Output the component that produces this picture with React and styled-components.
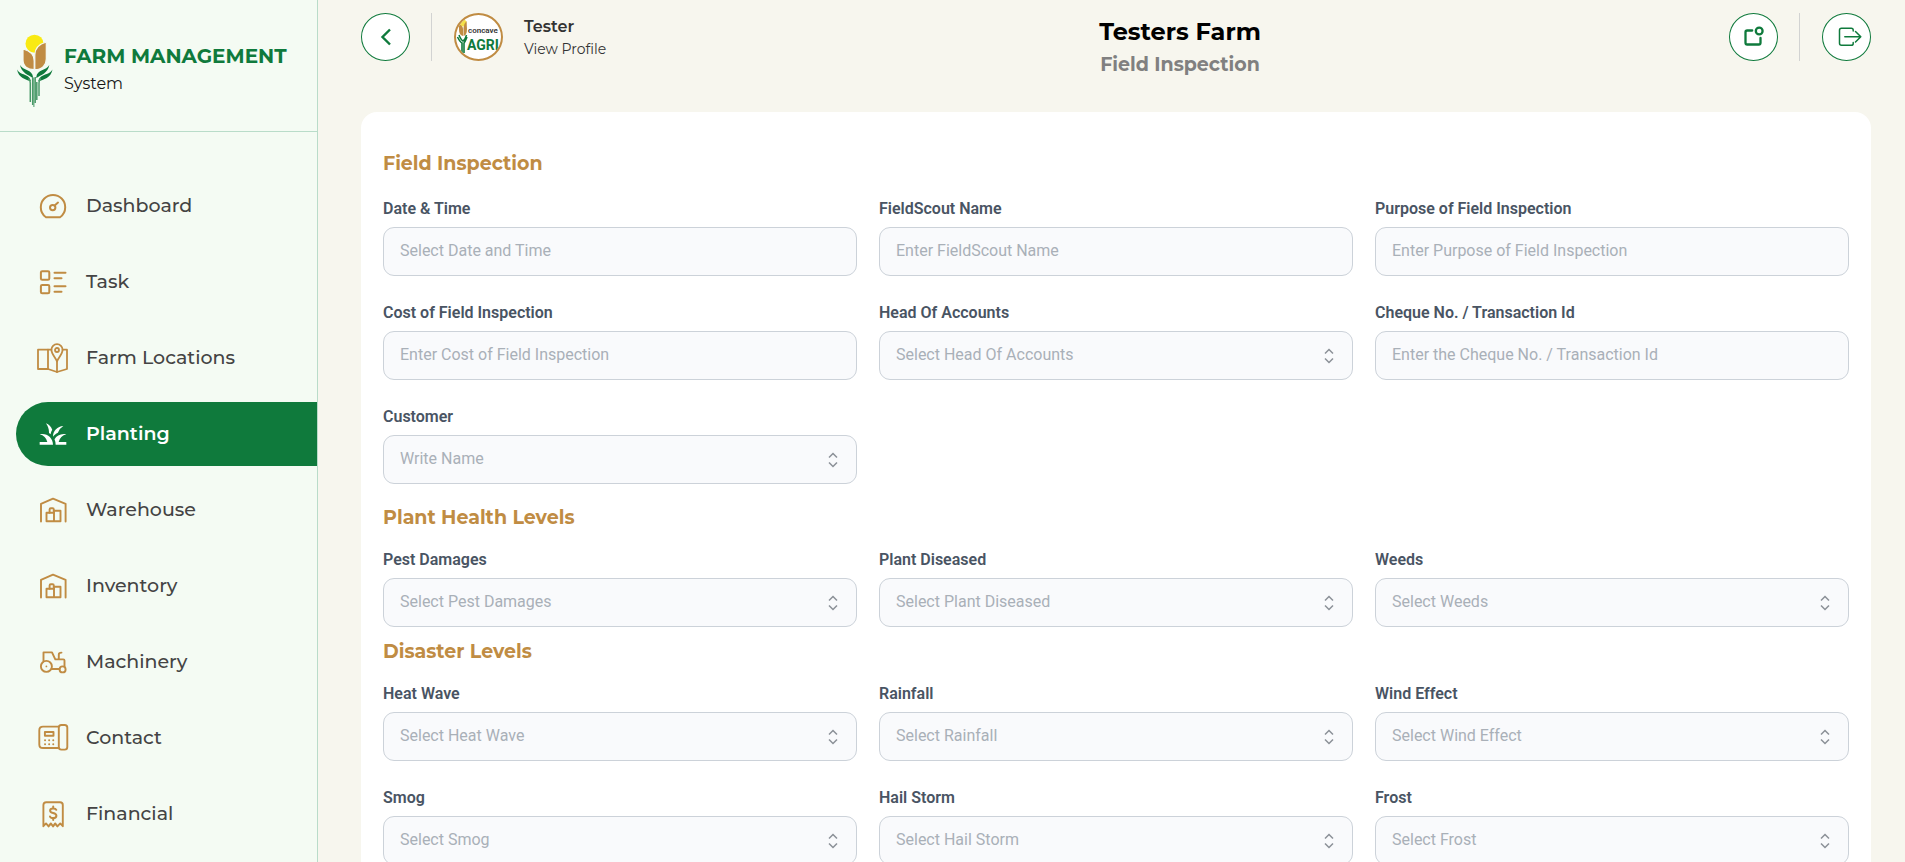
import React from "react";
import styled, { createGlobalStyle } from "styled-components";
import { MdGrass } from "react-icons/md";

const GREEN = "#0f7a3c";
const GOLD = "#c08c43";
const DISPLAY = 'Montserrat, Inter, "Open Sans", sans-serif';
const BODY = 'Roboto, "Liberation Sans", sans-serif';

const GlobalStyle = createGlobalStyle`
  *, *::before, *::after { box-sizing: border-box; }
  body { margin: 0; background: #f7f6ee; font-family: ${DISPLAY}; }
  h1, h2, p { margin: 0; }
  svg { display: block; overflow: visible; flex: none; }
`;

const Shell = styled.div`
  display: flex;
  height: 100vh;
  overflow: hidden;
`;

const Sidebar = styled.aside`
  flex: none;
  width: 318px;
  overflow: hidden;
  background: #f4fbf3;
  border-right: 1px solid #b9dcc9;
`;

const Brand = styled.div`
  display: flex;
  align-items: center;
  gap: 10px;
  height: 132px;
  padding: 9px 16px 0 17px;
  border-bottom: 1px solid #b9dcc9;
`;

const BrandName = styled.p`
  color: ${GREEN};
  font-size: 20px;
  font-weight: 700;
  line-height: 28px;
  white-space: nowrap;
`;

const BrandSub = styled.p`
  color: #161616;
  font-size: 16px;
  line-height: 28px;
`;

const Nav = styled.nav`
  display: flex;
  flex-direction: column;
  gap: 12px;
  padding: 42px 0 0 16px;
`;

const NavLink = styled.a`
  display: flex;
  flex: none;
  align-items: center;
  gap: 18px;
  height: 64px;
  padding-left: 22px;
  border-radius: 32px 0 0 32px;
  background: ${(p) => (p.$active ? GREEN : "transparent")};
  color: ${(p) => (p.$active ? "#fff" : "#444")};
  font-size: 19px;
  font-weight: ${(p) => (p.$active ? 600 : 500)};
  line-height: 28px;
  text-decoration: none;

  svg { color: ${(p) => (p.$active ? "#fff" : GOLD)}; }
`;

const IconSlot = styled.span`
  display: flex;
  flex: none;
  align-items: center;
  justify-content: center;
  width: 30px;
  height: 30px;
`;

const Main = styled.main`
  flex: 1;
  min-width: 0;
  padding: 13px 34px 0 43px;
  overflow-y: auto;
  scrollbar-width: none;
`;

const TopBar = styled.header`
  display: flex;
  justify-content: space-between;
  align-items: flex-start;
  height: 99px;
`;

const Group = styled.div`
  display: flex;
  align-items: center;
  min-width: ${(p) => (p.$wide ? "270px" : "0")};
`;

const RoundButton = styled.button`
  display: flex;
  align-items: center;
  justify-content: center;
  width: 49px;
  height: 48px;
  padding: 0;
  border: 1px solid ${GREEN};
  border-radius: 50%;
  background: #fff;
  color: ${GREEN};
  cursor: pointer;
`;

const Divider = styled.span`
  width: 1px;
  height: 48px;
  margin: 0 22px 0 21px;
  background: #d2d3d2;
`;

const Profile = styled.a`
  display: flex;
  align-items: center;
  gap: 21px;
  color: #333;
  text-decoration: none;
`;

const Avatar = styled.span`
  width: 49px;
  height: 48px;
  border: 2px solid ${GOLD};
  border-radius: 50%;
  background: #fff;
  overflow: hidden;
`;

const ProfileName = styled.p`
  font-size: 16px;
  font-weight: 600;
  line-height: 24px;
`;

const ProfileHint = styled.p`
  font-size: 14px;
  line-height: 20px;
`;

const Heading = styled.div`
  padding-top: 1px;
  text-align: center;
`;

const Title = styled.h1`
  color: #000;
  font-size: 24px;
  font-weight: 700;
  line-height: 36px;
`;

const Subtitle = styled.p`
  color: #808080;
  font-size: 19px;
  font-weight: 700;
  line-height: 30px;
`;

const Card = styled.form`
  min-height: calc(100vh - 112px);
  padding: 38px 22px;
  border-radius: 16px 16px 0 0;
  background: #fff;
`;

const Section = styled.section`
  margin-bottom: ${(p) => p.$after}px;
`;

const SectionTitle = styled.h2`
  margin-bottom: ${(p) => (p.$first ? 19 : 16)}px;
  color: ${GOLD};
  font-size: 19px;
  font-weight: 700;
  line-height: 28px;
`;

const FieldGrid = styled.div`
  display: grid;
  grid-template-columns: repeat(3, minmax(0, 1fr));
  gap: 25px 22px;
`;

const Field = styled.div`
  display: flex;
  flex-direction: column;
  gap: 6px;
`;

const Label = styled.label`
  color: #495463;
  font-family: ${BODY};
  font-size: 16px;
  font-weight: 600;
  line-height: 24px;
`;

const TextInput = styled.input`
  width: 100%;
  height: 49px;
  padding: 0 16px 2px;
  border: 1px solid #ccd2d9;
  border-radius: 11px;
  background: #f9fafc;
  color: #495463;
  font-family: ${BODY};
  font-size: 16px;

  &::placeholder { color: #a9b0b8; opacity: 1; }
`;

const SelectWrap = styled.div`
  display: grid;
  align-items: center;

  > * { grid-area: 1 / 1; }
  > svg { justify-self: end; margin-right: 18px; pointer-events: none; }
`;

const SelectBox = styled(TextInput).attrs({ as: "select" })`
  appearance: none;
  color: #a9b0b8;
`;

const Line = ({ width = 2, children, size = 30 }) => (
  <svg width={size} height={size} viewBox={`0 0 ${size} ${size}`} fill="none" stroke="currentColor"
    strokeWidth={width} strokeLinecap="round" strokeLinejoin="round" aria-hidden="true">
    {children}
  </svg>
);

const GaugeIcon = () => (
  <Line>
    <path d="M8 26.2C4.800 24 2.800 20.200 2.800 16.200A12.200 12.200 0 0 1 27.200 16.200C27.200 20.200 25.200 24 22 26.200Z" />
    <circle cx="14.700" cy="16.600" r="2.700" />
    <path d="M16.700 14.400L20 11.600" />
  </Line>
);

const TaskIcon = () => (
  <Line>
    <rect x="2.900" y="4.300" width="8.400" height="8.400" rx="1.300" />
    <rect x="2.900" y="17.900" width="8.400" height="8.400" rx="1.300" />
    <path d="M16.500 5.700H27.500M16.500 11.200H23.500M16.500 19.200H27.500M16.500 24.700H23.500" />
  </Line>
);

const MapIcon = () => (
  <Line width={1.8}>
    <path d="M13.400 6.700H0V26H10L19 29L29 26V6.700H24.600" />
    <path d="M10 6.700V26M19 18.500V29" />
    <path d="M19 18.300C17.400 14.600 13.400 10.900 13.400 6.800A5.600 5.600 0 0 1 24.600 6.800C24.600 10.900 20.600 14.600 19 18.300Z" />
    <circle cx="19" cy="7" r="2" />
  </Line>
);

const GrassIcon = () => <MdGrass size={32} aria-hidden="true" />;

const WarehouseIcon = () => (
  <Line width={1.9}>
    <path d="M3 26.500V8.800L15 3.600L27.600 8.800V26.500" />
    <path d="M8.500 17.800H15.800M8.500 17.800V26.300H22.500V15.800H15.800M16 15.800V26.300" />
    <path d="M11.600 17.800V14.400Q11.600 13.200 12.800 13.200H14.600Q15.800 13.200 15.800 14.400V17.800" />
  </Line>
);

const TractorIcon = () => (
  <Line width={1.9}>
    <circle cx="8.400" cy="19.400" r="5.500" />
    <circle cx="8.400" cy="19.400" r="0.900" fill="currentColor" stroke="none" />
    <circle cx="24.600" cy="22.400" r="3" />
    <path d="M5.500 14V5.400H14L17.300 12.400H25.300Q26.500 12.400 26.500 13.600V19.600M13.400 22H21.400M20.800 12.200V7.400Q20.800 5.600 23.500 5.600" />
  </Line>
);

const PhoneIcon = () => (
  <Line width={1.9}>
    <path d="M20.800 3.600H5Q1.300 3.600 1.300 7.200V21.400Q1.300 25 5 25H20.800" />
    <rect x="20.800" y="2" width="8.500" height="24.600" rx="2.600" />
    <rect x="6.900" y="9" width="8.600" height="3.800" />
    <path d="M7 17.200H7.100M11.100 17.200H11.200M15.200 17.200H15.300M7 21.200H7.100M11.100 21.200H11.200M15.200 21.200H15.300" />
  </Line>
);

const ReceiptIcon = () => (
  <Line width={1.9}>
    <path d="M5.400 27.200V6Q5.400 3.200 8.200 3.200H22Q24.800 3.200 24.800 6V27.200L22.200 24.400L19.400 27.400L17.200 24.400L15.100 27.400L12.800 24.400L10.600 27.400L8 24.400Z" />
    <path strokeWidth="2" d="M18.300 10.800C17.800 9.600 16.700 9.400 15.200 9.400C13.400 9.400 12.100 10.200 12.100 11.700C12.100 15 18.400 13 18.400 16.700C18.400 18.300 17 19.100 15.200 19.100C13.500 19.100 12.400 18.700 12 17.500M15.200 7.600V9.200M15.200 19.300V20.900" />
  </Line>
);

const BackIcon = () => (
  <Line size={24} width={2.4}>
    <path strokeLinecap="butt" strokeLinejoin="miter" d="M16 4.500L8.500 12L16 19.500" />
  </Line>
);

const NoticeIcon = () => (
  <Line size={24} width={2.3}>
    <path d="M10.200 5.500H5.200Q3.500 5.500 3.500 7.200V17.800Q3.500 19.500 5.200 19.500H16.800Q18.500 19.500 18.500 17.800V13" />
    <circle cx="17.200" cy="6" r="3.400" />
  </Line>
);

const LogoutIcon = () => (
  <Line size={24} width={1.5}>
    <path d="M18.200 6V5Q18.200 3.200 16.300 3.200H6.500Q4.500 3.200 4.500 5.200V18.300Q4.500 20.300 6.500 20.300H16.300Q18.200 20.300 18.200 18.400V17.400" />
    <path d="M9.800 11.700H25.800M20.500 6.500L25.800 11.700L20.500 17" />
  </Line>
);

const SortIcon = () => (
  <svg width="12" height="16" viewBox="0 0 12 16" fill="none" stroke="#8b9097" strokeWidth="1.500" aria-hidden="true">
    <path d="M2 5.500L6 1.500L10 5.500M2 10.500L6 14.500L10 10.500" />
  </svg>
);

const CropLogo = () => (
  <svg width="37" height="73" viewBox="0 0 37 73" aria-hidden="true">
    <circle cx="17.500" cy="9.700" r="9" fill="#f9ea12" />
    <g stroke="#f4fbf3" strokeWidth="1.200">
      <path fill={GOLD} d="M6 15C12 16.500 17.200 20.500 17.200 27V35.700C10.500 35.700 6 32 6 26Z" />
      <path fill={GOLD} d="M29.300 8C22.500 10 17.800 14.500 17.800 21V35.700C25 35.700 29.300 31 29.300 25Z" />
    </g>
    <g fill={GREEN}>
      <path d="M3 31C6 36.500 15.300 35.500 16 43V44C11.500 41 4.500 39 3 31Z" />
      <path d="M32.300 31C29.500 36.500 20 35.500 19.300 43V44C24 41 31 39 32.300 31Z" />
      <path d="M0 35.500C3.500 42 12.500 39 14 47.500C9 45.500 1.500 44 0 35.500Z" />
      <path d="M35.500 35.500C32 42 23 39 21.300 47.500C26.500 45.500 34 44 35.500 35.500Z" />
    </g>
    <g fill="none" stroke="#4a9a69" strokeWidth="1.500">
      <path d="M11.500 44.500Q13.300 46 13.300 49V68M15.700 43V71M18.200 43V69M23.800 44.500Q22 46 22 49V62M19.800 48V66" />
      <path strokeWidth="1" d="M16.900 44V73" />
    </g>
  </svg>
);

const AvatarArt = () => (
  <svg width="45" height="44" viewBox="0 0 45 44" role="img" aria-label="Concave Agri">
    <circle cx="7" cy="8" r="3.500" fill="#f4e14a" />
    <path fill={GOLD} d="M3 9Q7 11 7 14V21Q3 20 3 15ZM10.500 6Q7.500 9 7.500 13V21Q11 20 11 14Z" />
    <path fill="none" stroke={GREEN} strokeWidth="1.600" d="M1.500 22Q4 27 6 28V40M11 22Q9 27 8 28V38M3 20Q5 25 7 26Q9 25 10.500 20" />
    <text x="12" y="18" fontFamily="Roboto, sans-serif" fontSize="8" fontWeight="600" fill="#333">concave</text>
    <text x="11" y="35" fontFamily="Roboto, sans-serif" fontSize="14" fontWeight="700" fill={GREEN}>AGRI</text>
  </svg>
);

const navItems = [
  ["Dashboard", GaugeIcon],
  ["Task", TaskIcon],
  ["Farm Locations", MapIcon],
  ["Planting", GrassIcon],
  ["Warehouse", WarehouseIcon],
  ["Inventory", WarehouseIcon],
  ["Machinery", TractorIcon],
  ["Contact", PhoneIcon],
  ["Financial", ReceiptIcon],
];

const sections = [
  {
    title: "Field Inspection",
    after: 20,
    fields: [
      ["Date & Time", "Select Date and Time"],
      ["FieldScout Name", "Enter FieldScout Name"],
      ["Purpose of Field Inspection", "Enter Purpose of Field Inspection"],
      ["Cost of Field Inspection", "Enter Cost of Field Inspection"],
      ["Head Of Accounts", "Select Head Of Accounts", true],
      ["Cheque No. / Transaction Id", "Enter the Cheque No. / Transaction Id"],
      ["Customer", "Write Name", true],
    ],
  },
  {
    title: "Plant Health Levels",
    after: 11,
    fields: [
      ["Pest Damages", "Select Pest Damages", true],
      ["Plant Diseased", "Select Plant Diseased", true],
      ["Weeds", "Select Weeds", true],
    ],
  },
  {
    title: "Disaster Levels",
    after: 0,
    fields: [
      ["Heat Wave", "Select Heat Wave", true],
      ["Rainfall", "Select Rainfall", true],
      ["Wind Effect", "Select Wind Effect", true],
      ["Smog", "Select Smog", true],
      ["Hail Storm", "Select Hail Storm", true],
      ["Frost", "Select Frost", true],
    ],
  },
];

function FormField({ label, hint, select }) {
  const id = label.toLowerCase().replace(/[^a-z]+/g, "-");
  return (
    <Field>
      <Label htmlFor={id}>{label}</Label>
      {select ? (
        <SelectWrap>
          <SelectBox id={id} defaultValue="">
            <option value="">{hint}</option>
          </SelectBox>
          <SortIcon />
        </SelectWrap>
      ) : (
        <TextInput id={id} type="text" placeholder={hint} />
      )}
    </Field>
  );
}

export default function App() {
  return (
    <>
      <GlobalStyle />
      <Shell>
        <Sidebar>
          <Brand>
            <CropLogo />
            <div>
              <BrandName>FARM MANAGEMENT</BrandName>
              <BrandSub>System</BrandSub>
            </div>
          </Brand>
          <Nav aria-label="Main">
            {navItems.map(([name, Icon]) => (
              <NavLink key={name} href="#" $active={name === "Planting"}>
                <IconSlot><Icon /></IconSlot>
                {name}
              </NavLink>
            ))}
          </Nav>
        </Sidebar>
        <Main>
          <TopBar>
            <Group $wide>
              <RoundButton type="button" aria-label="Back"><BackIcon /></RoundButton>
              <Divider />
              <Profile href="#">
                <Avatar><AvatarArt /></Avatar>
                <div>
                  <ProfileName>Tester</ProfileName>
                  <ProfileHint>View Profile</ProfileHint>
                </div>
              </Profile>
            </Group>
            <Heading>
              <Title>Testers Farm</Title>
              <Subtitle>Field Inspection</Subtitle>
            </Heading>
            <Group>
              <RoundButton type="button" aria-label="Notifications"><NoticeIcon /></RoundButton>
              <Divider />
              <RoundButton type="button" aria-label="Log out"><LogoutIcon /></RoundButton>
            </Group>
          </TopBar>
          <Card>
            {sections.map((section, i) => (
              <Section key={section.title} $after={section.after}>
                <SectionTitle $first={i === 0}>{section.title}</SectionTitle>
                <FieldGrid>
                  {section.fields.map(([label, hint, select]) => (
                    <FormField key={label} label={label} hint={hint} select={select} />
                  ))}
                </FieldGrid>
              </Section>
            ))}
          </Card>
        </Main>
      </Shell>
    </>
  );
}
